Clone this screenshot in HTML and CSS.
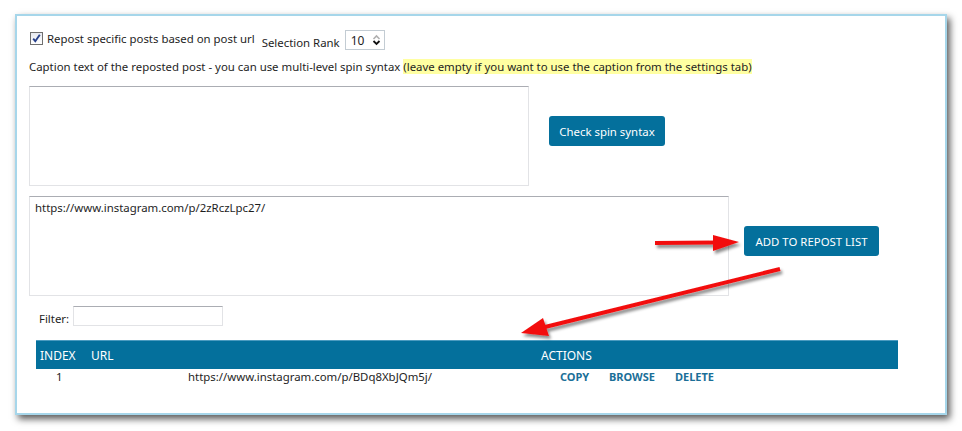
FILE: index.html
```html
<!DOCTYPE html>
<html>
<head>
<meta charset="utf-8">
<link rel="stylesheet" href="styles.css">
</head>
<body>
<div class="window">
  <div class="row-top">
    <label class="check">
      <span class="box"><svg width="11" height="11" viewBox="0 0 11 11"><path d="M2.2 5.6 L4.3 8.2 L8.8 1.8" fill="none" stroke="#27408b" stroke-width="1.9"/></svg></span>
      <span>Repost specific posts based on post url</span>
    </label>
    <div class="rank">
      <span class="rank-label">Selection Rank</span>
      <div class="spin">
        <span class="spin-val">10</span>
        <span class="spin-arrows">
          <svg width="9" height="6" viewBox="0 0 9 6"><path d="M1.5 5 L4.5 2 L7.5 5" fill="none" stroke="#b0b0b0" stroke-width="1.6"/></svg>
          <svg width="9" height="6" viewBox="0 0 9 6"><path d="M1.5 1 L4.5 4 L7.5 1" fill="none" stroke="#111" stroke-width="1.8"/></svg>
        </span>
      </div>
    </div>
  </div>
  <div class="caption-line">Caption text of the reposted post - you can use multi-level spin syntax <span class="hl">(leave empty if you want to use the caption from the settings tab)</span></div>
  <div class="row-caption">
    <div class="textarea ta1"></div>
    <button class="btn btn-spin">Check spin syntax</button>
  </div>
  <div class="row-url">
    <div class="textarea ta2">https://www.instagram.com/p/2zRczLpc27/</div>
    <button class="btn btn-add">ADD TO REPOST LIST</button>
  </div>
  <div class="filter">
    <span>Filter:</span>
    <div class="filter-input"></div>
  </div>
  <div class="table">
    <div class="thead">
      <span class="c-index">INDEX</span>
      <span class="c-url">URL</span>
      <span class="c-actions">ACTIONS</span>
    </div>
    <div class="trow">
      <span class="c-index num">1</span>
      <span class="c-url link">https://www.instagram.com/p/BDq8XbJQm5j/</span>
      <span class="c-actions acts"><b>COPY</b><b>BROWSE</b><b>DELETE</b></span>
    </div>
  </div>
</div>
<svg class="arrows" width="962" height="431" viewBox="0 0 962 431">
  <defs>
    <filter id="sh" x="-20%" y="-50%" width="140%" height="200%">
      <feDropShadow dx="2" dy="3" stdDeviation="1.6" flood-color="#000" flood-opacity="0.45"/>
    </filter>
  </defs>
  <g filter="url(#sh)" fill="#f21010" stroke="#f21010">
    <path d="M655 243 L718 242.5" stroke-width="4" fill="none"/>
    <path d="M713 235 L739 242 L713 251 Z" stroke="none"/>
    <path d="M780 269 L545 327" stroke-width="4" fill="none"/>
    <path d="M543 318 L521 333 L549 336 Z" stroke="none"/>
  </g>
</svg>
</body>
</html>
```
FILE: styles.css
```css
html, body {
  margin: 0;
  padding: 0;
  background: #ffffff;
}
body {
  width: 962px;
  height: 431px;
  overflow: hidden;
  position: relative;
  font-family: "Noto Sans", "Open Sans", sans-serif;
  font-size: 11.4px;
  color: #1e1e1e;
}
.window {
  box-sizing: border-box;
  width: 932px;
  height: 401px;
  margin: 14px 0 0 15px;
  border: 2px solid #a6d6ea;
  background: #fff;
  box-shadow: 3px 4px 7px rgba(0, 0, 0, 0.65);
  padding: 13px 0 0 12px;
}
.row-top {
  display: flex;
  align-items: flex-start;
  height: 21px;
}
.check {
  display: flex;
  align-items: center;
  gap: 4px;
  height: 18px;
}
.box {
  box-sizing: border-box;
  width: 13px;
  height: 13px;
  border: 1px solid #6f6f6f;
  background: linear-gradient(#e6e9f0, #ffffff);
  display: flex;
  align-items: center;
  justify-content: center;
  margin-left: 1px;
}
.rank {
  display: flex;
  align-items: flex-end;
  margin-left: 7px;
  height: 21px;
}
.rank-label {
  line-height: 14px;
  margin-right: 5px;
}
.spin {
  box-sizing: border-box;
  width: 40px;
  height: 20px;
  border: 1px solid #c3ccd3;
  display: flex;
  align-items: center;
  justify-content: space-between;
  padding: 0 3px 0 5px;
}
.spin-val {
  font-size: 12px;
}
.spin-arrows {
  display: flex;
  flex-direction: column;
}
.spin-arrows svg {
  display: block;
}
.caption-line {
  margin-top: 8px;
  line-height: 17px;
  height: 17px;
}
.hl {
  background: #ffffa2;
}
.row-caption {
  display: flex;
  align-items: flex-start;
  margin-top: 11px;
}
.textarea {
  box-sizing: border-box;
  border: 1px solid #e2e3e6;
  border-top-color: #abadb3;
  background: #fff;
}
.ta1 {
  width: 500px;
  height: 100px;
}
.btn {
  box-sizing: border-box;
  height: 30px;
  border: none;
  border-radius: 3px;
  background: #04709c;
  color: #fff;
  font-family: "Noto Sans", "Open Sans", sans-serif;
  font-size: 11.4px;
  padding: 0;
  margin-top: 30px;
}
.btn-spin {
  width: 116px;
  margin-left: 20px;
}
.row-url {
  display: flex;
  align-items: flex-start;
  margin-top: 10px;
}
.ta2 {
  width: 700px;
  height: 100px;
  padding: 3px 0 0 5px;
}
.btn-add {
  width: 135px;
  margin-left: 15px;
}
.filter {
  display: flex;
  align-items: flex-end;
  gap: 4px;
  margin: 10px 0 0 10px;
  height: 20px;
}
.filter span {
  line-height: 15px;
}
.filter-input {
  box-sizing: border-box;
  width: 150px;
  height: 20px;
  border: 1px solid #e2e3e6;
  border-top-color: #abadb3;
}
.table {
  margin: 14px 0 0 7px;
  width: 862px;
}
.thead {
  display: flex;
  align-items: flex-end;
  height: 29px;
  background: #04709c;
  color: #fff;
  font-size: 12px;
  border-top: 1px solid #4b9bc0;
  box-sizing: border-box;
  padding-bottom: 6px;
}
.thead span {
  line-height: 15px;
}
.c-index {
  width: 55px;
  padding-left: 4px;
  box-sizing: border-box;
}
.c-url {
  width: 450px;
  box-sizing: border-box;
}
.trow {
  display: flex;
  height: 16px;
  line-height: 16px;
}
.trow .num {
  padding-left: 20px;
}
.trow .link {
  padding-left: 97px;
}
.acts {
  display: flex;
  padding-left: 19px;
  font-size: 11px;
  color: #1b6f98;
}
.acts b {
  font-weight: bold;
}
.acts b:nth-child(1) { width: 49px; }
.acts b:nth-child(2) { width: 66px; }
.arrows {
  position: absolute;
  left: 0;
  top: 0;
  pointer-events: none;
}
```
